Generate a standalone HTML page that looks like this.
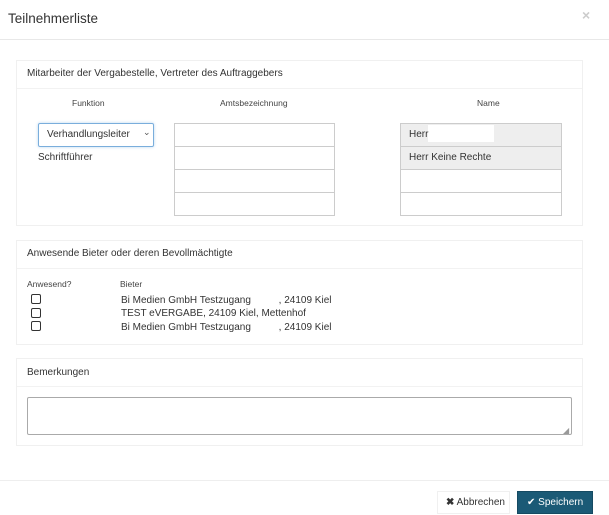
<!DOCTYPE html>
<html><head><meta charset="utf-8"><style>
*{box-sizing:border-box;margin:0;padding:0}
body{width:609px;height:515px;position:relative;background:#fff;font-family:"Liberation Sans",sans-serif;color:#333;overflow:hidden}
.a{position:absolute}
.t{font-size:10px;white-space:nowrap}
.s{font-size:8.5px;color:#444;white-space:nowrap}
.panel{position:absolute;border:1px solid #f0f0f0;background:#fff}
.ph{position:absolute;left:0;right:0;top:0;border-bottom:1px solid #f2f2f2;background:#fff}
.in{position:absolute;border:1px solid #ccc;background:#fff;height:24px}
.g{background:#eee}
.cb{position:absolute;width:10px;height:10px;border:1px solid #333;border-radius:2px}
</style></head><body>
<div class="a" style="left:8px;top:11px;font-size:13.5px;color:#333">Teilnehmerliste</div>
<div class="a" style="left:582px;top:7px;font-size:14px;color:#ccc;font-weight:bold">×</div>
<div class="a" style="left:0;right:0;top:39px;border-top:1px solid #e8e8e8"></div>

<div class="panel" style="left:16px;top:60px;width:567px;height:166px">
<div class="ph" style="height:28px"></div></div>
<div class="a t" style="left:27px;top:68px">Mitarbeiter der Vergabestelle, Vertreter des Auftraggebers</div>
<div class="a s" style="left:72px;top:98px">Funktion</div>
<div class="a s" style="left:220px;top:98px">Amtsbezeichnung</div>
<div class="a s" style="left:477px;top:98px">Name</div>
<div class="a" style="left:38px;top:123px;width:116px;height:24px;border:1px solid #7aaedc;border-radius:2px;box-shadow:0 0 3px #bcd8f0"></div>
<div class="a t" style="left:47px;top:129px">Verhandlungsleiter</div>
<div class="a" style="left:143px;top:127px;font-size:9px;color:#555">⌄</div>
<div class="a t" style="left:38px;top:152px">Schriftführer</div>
<div class="in" style="left:174px;top:123px;width:161px"></div>
<div class="in" style="left:174px;top:146px;width:161px"></div>
<div class="in" style="left:174px;top:169px;width:161px"></div>
<div class="in" style="left:174px;top:192px;width:161px"></div>
<div class="in g" style="left:400px;top:123px;width:162px"></div>
<div class="in g" style="left:400px;top:146px;width:162px"></div>
<div class="in" style="left:400px;top:169px;width:162px"></div>
<div class="in" style="left:400px;top:192px;width:162px"></div>
<div class="a" style="left:428px;top:125px;width:66px;height:17px;background:#fff"></div>
<div class="a t" style="left:409px;top:129px">Herr</div>
<div class="a t" style="left:409px;top:152px">Herr Keine Rechte</div>

<div class="panel" style="left:16px;top:240px;width:567px;height:105px">
<div class="ph" style="height:28px"></div></div>
<div class="a t" style="left:27px;top:248px">Anwesende Bieter oder deren Bevollmächtigte</div>
<div class="a s" style="left:27px;top:279px">Anwesend?</div>
<div class="a s" style="left:120px;top:279px">Bieter</div>
<div class="cb" style="left:31px;top:294px"></div>
<div class="cb" style="left:31px;top:308px"></div>
<div class="cb" style="left:31px;top:321px"></div>
<div class="a t" style="left:121px;top:295px">Bi Medien GmbH Testzugang&nbsp;&nbsp;&nbsp;&nbsp;&nbsp;&nbsp;&nbsp;&nbsp;&nbsp;&nbsp;, 24109 Kiel</div>
<div class="a t" style="left:121px;top:308px">TEST eVERGABE, 24109 Kiel, Mettenhof</div>
<div class="a t" style="left:121px;top:322px">Bi Medien GmbH Testzugang&nbsp;&nbsp;&nbsp;&nbsp;&nbsp;&nbsp;&nbsp;&nbsp;&nbsp;&nbsp;, 24109 Kiel</div>

<div class="panel" style="left:16px;top:358px;width:567px;height:88px">
<div class="ph" style="height:28px"></div></div>
<div class="a t" style="left:27px;top:367px">Bemerkungen</div>
<div class="a" style="left:27px;top:397px;width:545px;height:38px;border:1px solid #aaa;border-radius:2px"></div>
<div class="a" style="left:563px;top:426px;font-size:8px;color:#999">◢</div>

<div class="a" style="left:0;right:0;top:480px;border-top:1px solid #eee"></div>
<div class="a" style="left:437px;top:491px;width:73px;height:23px;border:1px solid #f0f0f0;background:#fff"></div>
<div class="a t" style="left:446px;top:497px;color:#333"><b>✖</b> Abbrechen</div>
<div class="a" style="left:517px;top:491px;width:76px;height:23px;background:#1b5a76;border:1px solid #154a62"></div>
<div class="a t" style="left:527px;top:497px;color:#fff">✔ Speichern</div>
</body></html>
